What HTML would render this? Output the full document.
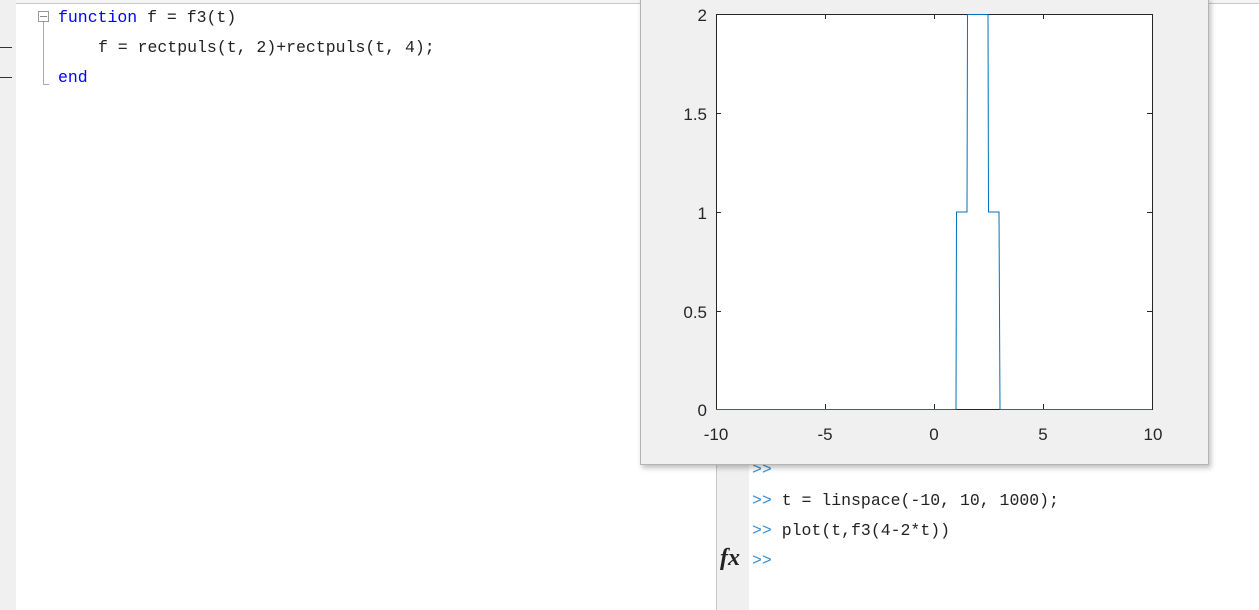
<!DOCTYPE html>
<html><head><meta charset="utf-8"><style>
html,body{margin:0;padding:0;width:1259px;height:610px;overflow:hidden;background:#fff;position:relative;font-family:"Liberation Mono","Noto Serif CJK SC",monospace;}
.gut{position:absolute;left:0;top:0;width:16px;height:610px;background:#f0f0f0;}
.topline{position:absolute;left:0;top:0;width:1259px;height:3px;background:#f4f4f4;border-bottom:1px solid #c8c8c8;}
.code{position:absolute;font-size:16.5px;white-space:pre;color:#222;line-height:20px;}
.kw{color:#0000ff;}
.dash{position:absolute;left:0;width:12px;height:1px;background:#333;}
.cmdg{position:absolute;left:716px;top:463px;width:32px;height:147px;background:#f0f0f0;border-left:1px solid #c8c8c8;}
.pr{color:#3a8fd4;}
.fig{position:absolute;left:640px;top:-2px;width:567px;height:465px;background:#f0f0f0;border:1px solid #b4b4b4;box-shadow:2px 3px 5px rgba(0,0,0,.25);}
</style></head><body>
<div class="topline"></div>
<div class="gut"></div>
<div class="dash" style="top:47px"></div>
<div class="dash" style="top:77px"></div>
<div style="position:absolute;left:38px;top:11px;width:9px;height:9px;border:1px solid #999;background:#fff"></div>
<div style="position:absolute;left:40px;top:16px;width:7px;height:1px;background:#888"></div>
<div style="position:absolute;left:43px;top:22px;width:1px;height:62px;background:#aaa"></div>
<div style="position:absolute;left:43px;top:84px;width:6px;height:1px;background:#aaa"></div>
<div class="code" style="left:58px;top:8px"><span class="kw">function</span> f = f3(t)</div>
<div class="code" style="left:98px;top:38px">f = rectpuls(t, 2)+rectpuls(t, 4);</div>
<div class="code" style="left:58px;top:68px"><span class="kw">end</span></div>

<div class="cmdg"></div>
<div class="code" style="left:752px;top:460px"><span class="pr">&gt;&gt;</span></div>
<div class="code" style="left:752px;top:491px"><span class="pr">&gt;&gt;</span> t = linspace(-10, 10, 1000);</div>
<div class="code" style="left:752px;top:521px"><span class="pr">&gt;&gt;</span> plot(t,f3(4-2*t))</div>
<div class="code" style="left:752px;top:551px"><span class="pr">&gt;&gt;</span></div>
<div style="position:absolute;left:720px;top:545px;font-family:'Liberation Serif',serif;font-style:italic;font-weight:bold;font-size:24px;color:#222">fx</div>

<div class="fig"></div>
<svg style="position:absolute;left:0;top:0" width="1259" height="610">
<rect x="716.5" y="14.5" width="436" height="395" fill="#fff" stroke="#262626" stroke-width="1"/>
<g stroke="#262626">
<line x1="825.5" y1="14" x2="825.5" y2="19"/><line x1="934.5" y1="14" x2="934.5" y2="19"/><line x1="1043.5" y1="14" x2="1043.5" y2="19"/>
<line x1="825.5" y1="409" x2="825.5" y2="404"/><line x1="934.5" y1="409" x2="934.5" y2="404"/><line x1="1043.5" y1="409" x2="1043.5" y2="404"/>
<line x1="716" y1="113.5" x2="721" y2="113.5"/><line x1="716" y1="212.5" x2="721" y2="212.5"/><line x1="716" y1="311.5" x2="721" y2="311.5"/>
<line x1="1152" y1="113.5" x2="1147" y2="113.5"/><line x1="1152" y1="212.5" x2="1147" y2="212.5"/><line x1="1152" y1="311.5" x2="1147" y2="311.5"/>
</g>
<polyline fill="none" stroke="#0072bd" stroke-width="1" points="716,409.5 956,409.5 956.5,212 967,212 967.5,14.5 988,14.5 988.5,212 999,212 1000,409.5 1152,409.5"/>
<g font-family="Liberation Sans, sans-serif" font-size="17" fill="#262626">
<text x="707" y="21" text-anchor="end">2</text>
<text x="707" y="120" text-anchor="end">1.5</text>
<text x="707" y="219" text-anchor="end">1</text>
<text x="707" y="318" text-anchor="end">0.5</text>
<text x="707" y="416" text-anchor="end">0</text>
<text x="716" y="440" text-anchor="middle">-10</text>
<text x="825" y="440" text-anchor="middle">-5</text>
<text x="934" y="440" text-anchor="middle">0</text>
<text x="1043" y="440" text-anchor="middle">5</text>
<text x="1153" y="440" text-anchor="middle">10</text>
</g>
</svg>
</body></html>
